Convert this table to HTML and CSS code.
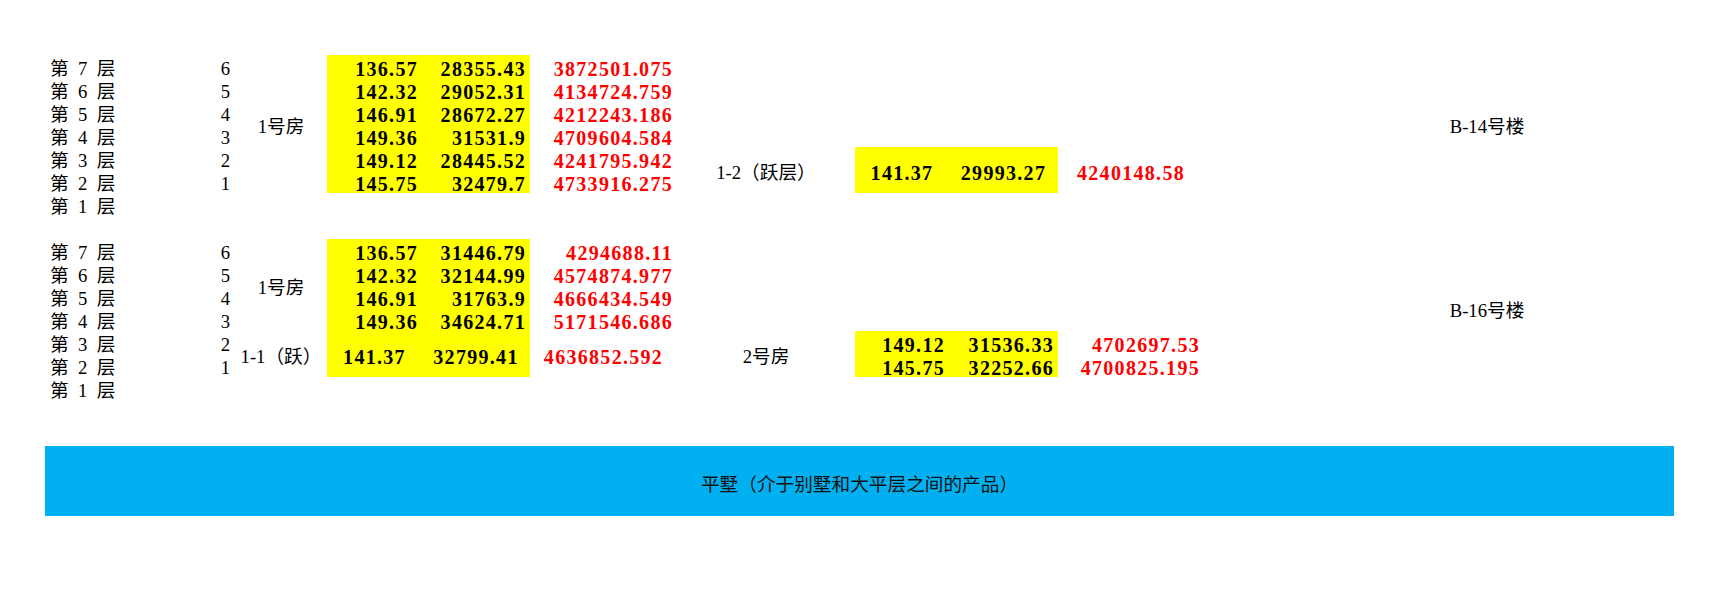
FILE: index.html
```html
<!DOCTYPE html>
<html lang="zh-CN">
<head>
<meta charset="utf-8">
<title>平墅</title>
<link rel="stylesheet" href="styles.css">
</head>
<body>
<div class="page">
  <div class="sheet">
    <div class="cell ca r1 label">第 7 层</div>
    <div class="cell ca r2 label">第 6 层</div>
    <div class="cell ca r3 label">第 5 层</div>
    <div class="cell ca r4 label">第 4 层</div>
    <div class="cell ca r5 label">第 3 层</div>
    <div class="cell ca r6 label">第 2 层</div>
    <div class="cell ca r7 label">第 1 层</div>

    <div class="cell cb r1 label right">6</div>
    <div class="cell cb r2 label right">5</div>
    <div class="cell cb r3 label right">4</div>
    <div class="cell cb r4 label right">3</div>
    <div class="cell cb r5 label right">2</div>
    <div class="cell cb r6 label right">1</div>

    <div class="cell cc r1 s6 label center">1号房</div>

    <div class="cell cd r1 num yellow right">136.57</div>
    <div class="cell cd r2 num yellow right">142.32</div>
    <div class="cell cd r3 num yellow right">146.91</div>
    <div class="cell cd r4 num yellow right">149.36</div>
    <div class="cell cd r5 num yellow right">149.12</div>
    <div class="cell cd r6 num yellow right">145.75</div>

    <div class="cell ce r1 num yellow right">28355.43</div>
    <div class="cell ce r2 num yellow right">29052.31</div>
    <div class="cell ce r3 num yellow right">28672.27</div>
    <div class="cell ce r4 num yellow right">31531.9</div>
    <div class="cell ce r5 num yellow right">28445.52</div>
    <div class="cell ce r6 num yellow right">32479.7</div>

    <div class="cell cf r1 num red right">3872501.075</div>
    <div class="cell cf r2 num red right">4134724.759</div>
    <div class="cell cf r3 num red right">4212243.186</div>
    <div class="cell cf r4 num red right">4709604.584</div>
    <div class="cell cf r5 num red right">4241795.942</div>
    <div class="cell cf r6 num red right">4733916.275</div>

    <div class="cell cg r5 s2 label center">1-2（跃层）</div>
    <div class="cell ch r5 s2 num yellow center">141.37</div>
    <div class="cell ci r5 s2 num yellow center">29993.27</div>
    <div class="cell cj r5 s2 num red center">4240148.58</div>

    <div class="cell cl r1 s6 label center">B-14号楼</div>
  </div>

  <div class="sheet second">
    <div class="cell ca r1 label">第 7 层</div>
    <div class="cell ca r2 label">第 6 层</div>
    <div class="cell ca r3 label">第 5 层</div>
    <div class="cell ca r4 label">第 4 层</div>
    <div class="cell ca r5 label">第 3 层</div>
    <div class="cell ca r6 label">第 2 层</div>
    <div class="cell ca r7 label">第 1 层</div>

    <div class="cell cb r1 label right">6</div>
    <div class="cell cb r2 label right">5</div>
    <div class="cell cb r3 label right">4</div>
    <div class="cell cb r4 label right">3</div>
    <div class="cell cb r5 label right">2</div>
    <div class="cell cb r6 label right">1</div>

    <div class="cell cc r1 s4 label center">1号房</div>
    <div class="cell cc r5 s2 label center">1-1（跃）</div>

    <div class="cell cd r1 num yellow right">136.57</div>
    <div class="cell cd r2 num yellow right">142.32</div>
    <div class="cell cd r3 num yellow right">146.91</div>
    <div class="cell cd r4 num yellow right">149.36</div>
    <div class="cell cd r5 s2 num yellow center">141.37</div>

    <div class="cell ce r1 num yellow right">31446.79</div>
    <div class="cell ce r2 num yellow right">32144.99</div>
    <div class="cell ce r3 num yellow right">31763.9</div>
    <div class="cell ce r4 num yellow right">34624.71</div>
    <div class="cell ce r5 s2 num yellow center">32799.41</div>

    <div class="cell cf r1 num red right">4294688.11</div>
    <div class="cell cf r2 num red right">4574874.977</div>
    <div class="cell cf r3 num red right">4666434.549</div>
    <div class="cell cf r4 num red right">5171546.686</div>
    <div class="cell cf r5 s2 num red center">4636852.592</div>

    <div class="cell cg r5 s2 label center">2号房</div>

    <div class="cell ch r5 num yellow right">149.12</div>
    <div class="cell ch r6 num yellow right">145.75</div>
    <div class="cell ci r5 num yellow right">31536.33</div>
    <div class="cell ci r6 num yellow right">32252.66</div>
    <div class="cell cj r5 num red right">4702697.53</div>
    <div class="cell cj r6 num red right">4700825.195</div>

    <div class="cell cl r1 s6 label center">B-16号楼</div>
  </div>

  <div class="band">平墅（介于别墅和大平层之间的产品）</div>
</div>
</body>
</html>
```
FILE: styles.css
```css
html, body {
  margin: 0;
  padding: 0;
  background: #ffffff;
}

.page {
  width: 1716px;
  height: 591px;
  box-sizing: border-box;
  padding: 55px 0 0 45px;
  overflow: hidden;
}

.sheet {
  display: grid;
  grid-template-columns: 135px 55px 92px 95px 108px 147px 178px 94px 109px 146px 216px 134px 120px;
  grid-template-rows: repeat(7, 23px);
  width: 1629px;
}

.sheet.second {
  margin-top: 23px;
}

.cell {
  display: flex;
  align-items: center;
  box-sizing: border-box;
  padding-top: 5px;
  white-space: pre;
  overflow: visible;
}

.label {
  font-family: "Liberation Serif", "Noto Sans CJK SC", serif;
  font-size: 18.67px;
  line-height: 18px;
  color: #000000;
  word-spacing: 0.25em;
  padding-left: 5px;
  padding-right: 5px;
}

.num {
  font-family: "Liberation Serif", serif;
  font-weight: bold;
  font-size: 20px;
  line-height: 18px;
  letter-spacing: 1.3px;
  color: #000000;
  padding-left: 4px;
  padding-right: 4px;
}

.red { color: #ff0000; }
.yellow { background: #ffff00; }

.right { justify-content: flex-end; }
.center { justify-content: center; }

.ca { grid-column: 1; }
.cb { grid-column: 2; }
.cc { grid-column: 3; }
.cd { grid-column: 4; }
.ce { grid-column: 5; }
.cf { grid-column: 6; }
.cg { grid-column: 7; }
.ch { grid-column: 8; }
.ci { grid-column: 9; }
.cj { grid-column: 10; }
.ck { grid-column: 11; }
.cl { grid-column: 12; }

.r1 { grid-row-start: 1; }
.r2 { grid-row-start: 2; }
.r3 { grid-row-start: 3; }
.r4 { grid-row-start: 4; }
.r5 { grid-row-start: 5; }
.r6 { grid-row-start: 6; }
.r7 { grid-row-start: 7; }

.s2 { grid-row-end: span 2; }
.s4 { grid-row-end: span 4; }
.s6 { grid-row-end: span 6; }

.band {
  margin-top: 46px;
  width: 1629px;
  height: 70px;
  background: #00b0f0;
  display: flex;
  align-items: center;
  justify-content: center;
  padding-top: 3px;
  box-sizing: border-box;
  font-family: "Noto Sans CJK SC", sans-serif;
  font-size: 18.67px;
  line-height: 20px;
  color: #111111;
}
```
